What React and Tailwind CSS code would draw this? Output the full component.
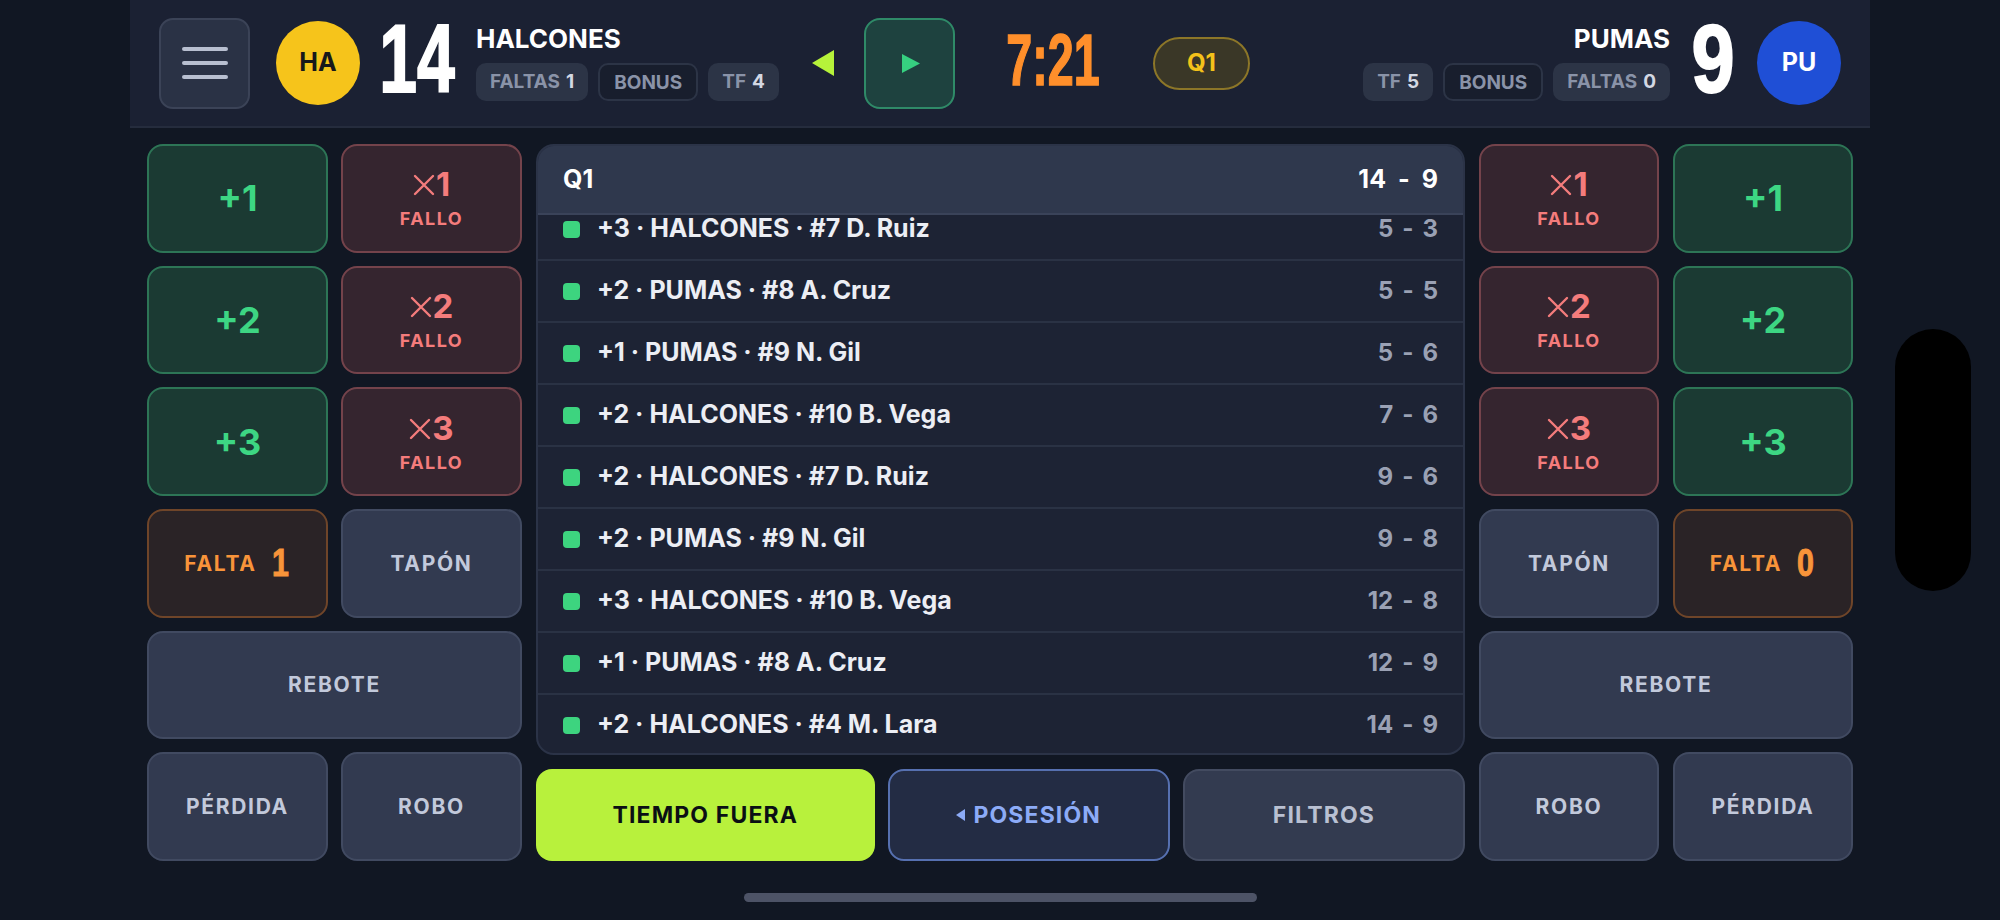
import React from 'react';

const plays = [
    { pts: '+3', team: 'HALCONES', player: '#7 D. Ruiz', score: ['5', '3'] },
    { pts: '+2', team: 'PUMAS', player: '#8 A. Cruz', score: ['5', '5'] },
    { pts: '+1', team: 'PUMAS', player: '#9 N. Gil', score: ['5', '6'] },
    { pts: '+2', team: 'HALCONES', player: '#10 B. Vega', score: ['7', '6'] },
    { pts: '+2', team: 'HALCONES', player: '#7 D. Ruiz', score: ['9', '6'] },
    { pts: '+2', team: 'PUMAS', player: '#9 N. Gil', score: ['9', '8'] },
    { pts: '+3', team: 'HALCONES', player: '#10 B. Vega', score: ['12', '8'] },
    { pts: '+1', team: 'PUMAS', player: '#8 A. Cruz', score: ['12', '9'] },
    { pts: '+2', team: 'HALCONES', player: '#4 M. Lara', score: ['14', '9'] },
];

function BigNum({ value, width, size, scale, className = '' }) {
    return (
        <div className={`shrink-0 flex justify-center ${width} ${className}`}>
            <span className={`inline-block font-['Liberation_Sans'] font-bold leading-none ${size} ${scale}`}>
                {value}
            </span>
        </div>
    );
}

function Chip({ label, value, outline }) {
    return (
        <div
            className={
                outline
                    ? 'h-[38px] px-[14px] rounded-[10px] border-2 border-[#2c3446] bg-[#181e2d] flex items-center text-[19px] font-bold text-[#8a93a8] pt-[3px]'
                    : 'h-[38px] px-[14px] rounded-[10px] bg-[#2c3446] flex items-center gap-[6px] text-[19px] font-bold text-[#8a93a8]'
            }
        >
            {label}
            {value !== undefined && <span className="text-[#d3d8e3]">{value}</span>}
        </div>
    );
}

function Made({ n }) {
    return (
        <button className="rounded-[16px] border-2 border-[#2d7556] bg-[#1b3a33] flex items-center justify-center text-[36px] font-bold text-[#3dd683] leading-none">
            +{n}
        </button>
    );
}

function Miss({ n }) {
    return (
        <button className="rounded-[16px] border-2 border-[#74434b] bg-[#35252f] flex flex-col items-center justify-center text-[#f47c7c]">
            <div className="flex items-center gap-[1px] text-[33px] font-bold leading-none">
                <svg width="22" height="22" viewBox="0 0 22 22" className="mt-[1px]">
                    <path d="M2 2 L20 20 M20 2 L2 20" stroke="currentColor" strokeWidth="2.4" strokeLinecap="round" />
                </svg>
                {n}
            </div>
            <div className="mt-[9px] text-[18px] font-bold tracking-[0.08em] leading-none">FALLO</div>
        </button>
    );
}

function Falta({ n }) {
    return (
        <button className="rounded-[16px] border-2 border-[#6f4529] bg-[#2a2326] flex items-center justify-center gap-[13px] text-[#f8943a]">
            <span className="text-[21px] font-bold tracking-[0.08em]">FALTA</span>
            <span className="font-['Liberation_Sans'] font-bold text-[38px] leading-none inline-block scale-x-[0.8] [-webkit-text-stroke:1px_#f8943a]">{n}</span>
        </button>
    );
}

function Plain({ label, wide }) {
    return (
        <button
            className={`rounded-[16px] border-2 border-[#414a61] bg-[#323a50] flex items-center justify-center text-[21px] font-bold tracking-[0.08em] text-[#c2c9db] ${wide ? 'col-span-2' : ''}`}
        >
            {label}
        </button>
    );
}

function Header() {
    return (
        <header className="h-[128px] shrink-0 bg-[#1b2133] border-b-2 border-[#252c3d] px-[29px] flex items-center">
            <button className="w-[91px] h-[91px] shrink-0 rounded-[14px] border-2 border-[#3b4357] bg-[#2a3245] flex flex-col items-center justify-center gap-[10px]">
                <span className="w-[46px] h-[4px] rounded-full bg-[#b8bfd0]" />
                <span className="w-[46px] h-[4px] rounded-full bg-[#b8bfd0]" />
                <span className="w-[46px] h-[4px] rounded-full bg-[#b8bfd0]" />
            </button>

            <div className="ml-[26px] w-[84px] h-[84px] shrink-0 rounded-full bg-[#f6c41b] flex items-center justify-center text-[25px] font-bold text-[#18181b]">
                HA
            </div>

            <BigNum value="14" width="w-[74px]" size="text-[97px]" scale="scale-x-[0.7] [-webkit-text-stroke:2px_#fff]" className="ml-[20px] mb-[10px] text-white" />

            <div className="ml-[22px] flex flex-col gap-[10px]">
                <div className="text-[26px] leading-[28px] font-bold text-white">HALCONES</div>
                <div className="flex gap-[10px]">
                    <Chip label="FALTAS" value="1" />
                    <Chip label="BONUS" outline />
                    <Chip label="TF" value="4" />
                </div>
            </div>

            <svg width="24" height="28" viewBox="0 0 24 28" className="ml-[32px] shrink-0">
                <path d="M1 14 L23 1 L23 27 Z" fill="#b6f23a" />
            </svg>

            <button className="ml-[29px] w-[91px] h-[91px] shrink-0 rounded-[16px] border-2 border-[#2f8a68] bg-[#1e423f] flex items-center justify-center">
                <svg width="20" height="21" viewBox="0 0 20 21" className="ml-[4px]">
                    <path d="M1 1 L19 10.5 L1 20 Z" fill="#36d080" />
                </svg>
            </button>

            <BigNum value="7:21" width="w-[93px]" size="text-[73px]" scale="scale-x-[0.64] [-webkit-text-stroke:1.5px_#ff8f2b]" className="ml-[52px] mb-[8px] text-[#ff8f2b]" />

            <div className="ml-[53px] w-[97px] h-[53px] shrink-0 rounded-full border-2 border-[#8c7628] bg-[#3a3727] flex items-center justify-center text-[24px] font-bold text-[#f4c21a]">
                Q1
            </div>

            <div className="ml-auto flex flex-col items-end gap-[10px]">
                <div className="text-[26px] leading-[28px] font-bold text-white">PUMAS</div>
                <div className="flex gap-[10px]">
                    <Chip label="TF" value="5" />
                    <Chip label="BONUS" outline />
                    <Chip label="FALTAS" value="0" />
                </div>
            </div>

            <BigNum value="9" width="w-[40px]" size="text-[97px]" scale="scale-x-[0.8] [-webkit-text-stroke:2px_#fff]" className="ml-[23px] mb-[10px] text-white" />

            <div className="ml-[24px] w-[84px] h-[84px] shrink-0 rounded-full bg-[#1f4fd6] flex items-center justify-center text-[25px] font-bold text-white">
                PU
            </div>
        </header>
    );
}

function PlayLog() {
    return (
        <div className="flex-1 min-h-0 rounded-[18px] border-2 border-[#2b3347] bg-[#1d2334] flex flex-col overflow-hidden">
            <div className="h-[69px] shrink-0 bg-[#2f384d] border-b-2 border-[#3a4359] px-[25px] flex items-center justify-between text-[25px] font-bold text-white">
                <span>Q1</span>
                <span className="flex gap-[12px]">
                    <span>14</span>
                    <span>-</span>
                    <span>9</span>
                </span>
            </div>
            <div className="flex-1 min-h-0 overflow-hidden">
                <div className="-mt-[16px]">
                    {plays.map((p, i) => (
                        <div key={i} className="h-[62px] border-b-2 border-[#2a3244] px-[25px] flex items-center">
                            <span className="w-[17px] h-[17px] rounded-[4px] bg-[#3dd47f] shrink-0" />
                            <span className="ml-[17px] text-[25px] font-bold text-[#eceef4]">
                                {p.pts} · {p.team} · {p.player}
                            </span>
                            <span className="ml-auto flex gap-[9px] text-[24px] font-bold text-[#9aa1b4]">
                                <span>{p.score[0]}</span>
                                <span>-</span>
                                <span>{p.score[1]}</span>
                            </span>
                        </div>
                    ))}
                </div>
            </div>
        </div>
    );
}

export default function App() {
    return (
        <div className="relative w-[2000px] h-[920px] overflow-hidden bg-[#111723] font-['Inter',sans-serif]">
            <div className="mx-[130px] h-full flex flex-col">
                <Header />

                <main className="px-[17px] pt-[16px] h-[733px] flex gap-[14px]">
                    <div className="w-[375px] shrink-0 grid grid-cols-2 grid-rows-6 gap-[13px]">
                        <Made n="1" />
                        <Miss n="1" />
                        <Made n="2" />
                        <Miss n="2" />
                        <Made n="3" />
                        <Miss n="3" />
                        <Falta n="1" />
                        <Plain label="TAPÓN" />
                        <Plain label="REBOTE" wide />
                        <Plain label="PÉRDIDA" />
                        <Plain label="ROBO" />
                    </div>

                    <div className="flex-1 flex flex-col gap-[14px]">
                        <PlayLog />
                        <div className="h-[92px] shrink-0 grid grid-cols-[1.2fr_1fr_1fr] gap-[13px]">
                            <button className="rounded-[16px] bg-[#b8f13c] flex items-center justify-center text-[23px] font-bold tracking-[0.05em] text-[#0b0f14]">
                                TIEMPO FUERA
                            </button>
                            <button className="rounded-[16px] border-2 border-[#5670b0] bg-[#232c44] flex items-center justify-center gap-[8px] text-[23px] font-bold tracking-[0.05em] text-[#8cabf7]">
                                <svg width="9" height="12" viewBox="0 0 9 12">
                                    <path d="M0 6 L9 0 L9 12 Z" fill="currentColor" />
                                </svg>
                                POSESIÓN
                            </button>
                            <button className="rounded-[16px] border-2 border-[#434b60] bg-[#333b50] flex items-center justify-center text-[23px] font-bold tracking-[0.05em] text-[#b9c0d2]">
                                FILTROS
                            </button>
                        </div>
                    </div>

                    <div className="w-[374px] shrink-0 grid grid-cols-2 grid-rows-6 gap-x-[14px] gap-y-[13px]">
                        <Miss n="1" />
                        <Made n="1" />
                        <Miss n="2" />
                        <Made n="2" />
                        <Miss n="3" />
                        <Made n="3" />
                        <Plain label="TAPÓN" />
                        <Falta n="0" />
                        <Plain label="REBOTE" wide />
                        <Plain label="ROBO" />
                        <Plain label="PÉRDIDA" />
                    </div>
                </main>
            </div>

            {/* device camera cutout */}
            <div className="absolute left-[1895px] top-[329px] w-[76px] h-[262px] rounded-full bg-black" />
            {/* home indicator */}
            <div className="absolute left-[744px] top-[893px] w-[513px] h-[9px] rounded-full bg-[#4d5366]" />
        </div>
    );
}
